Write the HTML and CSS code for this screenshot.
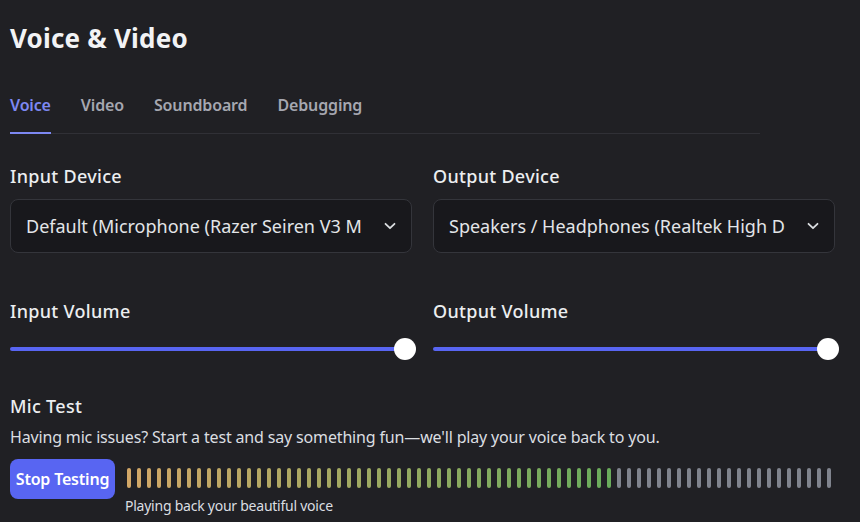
FILE: index.html
```html
<!DOCTYPE html>
<html lang="en">
<head>
<meta charset="utf-8">
<title>Voice &amp; Video</title>
<link rel="stylesheet" href="styles.css">
</head>
<body>
<main class="page">
  <h1 class="title">Voice &amp; Video</h1>
  <nav class="tabs">
    <span class="tab active">Voice</span>
    <span class="tab">Video</span>
    <span class="tab">Soundboard</span>
    <span class="tab">Debugging</span>
  </nav>

  <section class="grid devices">
    <div class="field">
      <h2 class="label">Input Device</h2>
      <div class="select">
        <span class="select-text">Default (Microphone (Razer Seiren V3 Mini))</span>
        <svg class="chev" width="12" height="8" viewBox="0 0 12 8"><path d="M1.5 1.8 L6 6.2 L10.5 1.8" fill="none" stroke="#dbdee1" stroke-width="1.8" stroke-linecap="round" stroke-linejoin="round"/></svg>
      </div>
    </div>
    <div class="field">
      <h2 class="label">Output Device</h2>
      <div class="select">
        <span class="select-text">Speakers / Headphones (Realtek High Definition Audio)</span>
        <svg class="chev" width="12" height="8" viewBox="0 0 12 8"><path d="M1.5 1.8 L6 6.2 L10.5 1.8" fill="none" stroke="#dbdee1" stroke-width="1.8" stroke-linecap="round" stroke-linejoin="round"/></svg>
      </div>
    </div>
  </section>

  <section class="grid volumes">
    <div class="field">
      <h2 class="label">Input Volume</h2>
      <div class="slider"><div class="track"></div><div class="knob"></div></div>
    </div>
    <div class="field">
      <h2 class="label">Output Volume</h2>
      <div class="slider"><div class="track"></div><div class="knob"></div></div>
    </div>
  </section>

  <section class="mic">
    <h2 class="label">Mic Test</h2>
    <p class="desc">Having mic issues? Start a test and say something fun—we'll play your voice back to you.</p>
    <div class="mic-row">
      <button class="btn">Stop Testing</button>
      <div class="meter">
        <div class="bars">
          <i style="background:#d2a767"></i><i style="background:#d0a767"></i><i style="background:#cea767"></i><i style="background:#cca766"></i><i style="background:#c9a766"></i><i style="background:#c7a766"></i><i style="background:#c5a766"></i><i style="background:#c3a765"></i><i style="background:#c1a765"></i><i style="background:#bea765"></i><i style="background:#bca765"></i><i style="background:#baa764"></i><i style="background:#b8a864"></i><i style="background:#b6a864"></i><i style="background:#b4a864"></i><i style="background:#b1a864"></i><i style="background:#afa863"></i><i style="background:#ada863"></i><i style="background:#aba863"></i><i style="background:#a9a863"></i><i style="background:#a6a862"></i><i style="background:#a4a962"></i><i style="background:#a2a962"></i><i style="background:#a0a962"></i><i style="background:#9da962"></i><i style="background:#9ba961"></i><i style="background:#99a961"></i><i style="background:#97a961"></i><i style="background:#94aa61"></i><i style="background:#92aa60"></i><i style="background:#90aa60"></i><i style="background:#8eaa60"></i><i style="background:#8caa60"></i><i style="background:#8aaa5f"></i><i style="background:#87aa5f"></i><i style="background:#85aa5f"></i><i style="background:#83ab5f"></i><i style="background:#81ab5f"></i><i style="background:#7fab5e"></i><i style="background:#7dab5e"></i><i style="background:#7bab5e"></i><i style="background:#79ab5e"></i><i style="background:#77ab5d"></i><i style="background:#75ab5d"></i><i style="background:#72ac5d"></i><i style="background:#70ac5d"></i><i style="background:#6eac5c"></i><i style="background:#6cac5c"></i><i style="background:#6aac5c"></i>
          <i></i><i></i><i></i><i></i><i></i><i></i><i></i><i></i><i></i><i></i><i></i><i></i><i></i><i></i><i></i><i></i><i></i><i></i><i></i><i></i><i></i><i></i>
        </div>
        <div class="caption">Playing back your beautiful voice</div>
      </div>
    </div>
  </section>
</main>
</body>
</html>
```
FILE: styles.css
```css
* { box-sizing: border-box; }
html, body {
  margin: 0;
  padding: 0;
  background: #202024;
  width: 860px;
  height: 522px;
  overflow: hidden;
}
body {
  font-family: "Noto Sans", "Open Sans", sans-serif;
  color: #dbdee1;
}
.page {
  padding: 22px 10px 0 10px;
  width: 845px;
}
.title {
  margin: 0;
  font-size: 26px;
  line-height: 32px;
  font-weight: 700;
  letter-spacing: 0.2px;
  color: #f2f3f5;
}
.tabs {
  margin-top: 41px;
  width: 750px;
  display: flex;
  gap: 30px;
  border-bottom: 1px solid #303036;
}
.tab {
  font-size: 16px;
  line-height: 20px;
  font-weight: 600;
  letter-spacing: -0.15px;
  color: #a5a7b0;
  padding-bottom: 17px;
  border-bottom: 2px solid transparent;
  margin-bottom: -1px;
}
.tab.active {
  color: #7d88f2;
  border-bottom-color: #7d88f2;
}
.grid {
  display: grid;
  grid-template-columns: 402px 402px;
  column-gap: 21px;
}
.devices { margin-top: 30px; }
.volumes { margin-top: 46px; }
.label {
  margin: 0;
  font-size: 18px;
  line-height: 24px;
  font-weight: 500;
  letter-spacing: 0.3px;
  color: #eceef0;
}
.select {
  margin-top: 11px;
  height: 54px;
  border: 1px solid #34353b;
  border-radius: 8px;
  background: #18181c;
  display: flex;
  align-items: center;
  padding: 0 15px 0 15px;
  gap: 22px;
}
.select-text {
  flex: 1;
  min-width: 0;
  overflow: hidden;
  white-space: nowrap;
  font-size: 18px;
  line-height: 24px;
  color: #e3e5e8;
}
.chev { flex: none; }
.slider {
  position: relative;
  margin-top: 15px;
  height: 22px;
}
.track {
  position: absolute;
  left: 0;
  right: 10px;
  top: 9px;
  height: 4px;
  border-radius: 2px;
  background: #5865f2;
}
.knob {
  position: absolute;
  right: -4px;
  top: 0;
  width: 22px;
  height: 22px;
  border-radius: 50%;
  background: #ffffff;
}
.mic { margin-top: 34px; }
.desc {
  margin: 9px 0 0 0;
  font-size: 16px;
  line-height: 20px;
  letter-spacing: -0.16px;
  color: #dbdee1;
}
.mic-row {
  margin-top: 12px;
  display: flex;
  align-items: flex-start;
  gap: 10px;
}
.btn {
  flex: none;
  width: 105px;
  height: 40px;
  border: 0;
  border-radius: 8px;
  background: #5865f2;
  color: #ffffff;
  font-family: inherit;
  font-size: 16px;
  font-weight: 600;
  letter-spacing: -0.2px;
  padding: 0;
}
.meter { padding-top: 9px; }
.bars {
  display: flex;
  gap: 6px;
  padding-left: 2px;
}
.bars i {
  display: block;
  width: 4px;
  height: 20px;
  border-radius: 2px;
  background: #80848e;
}
.caption {
  margin-top: 9px;
  font-size: 14px;
  line-height: 18px;
  letter-spacing: -0.24px;
  color: #dbdee1;
}
```
